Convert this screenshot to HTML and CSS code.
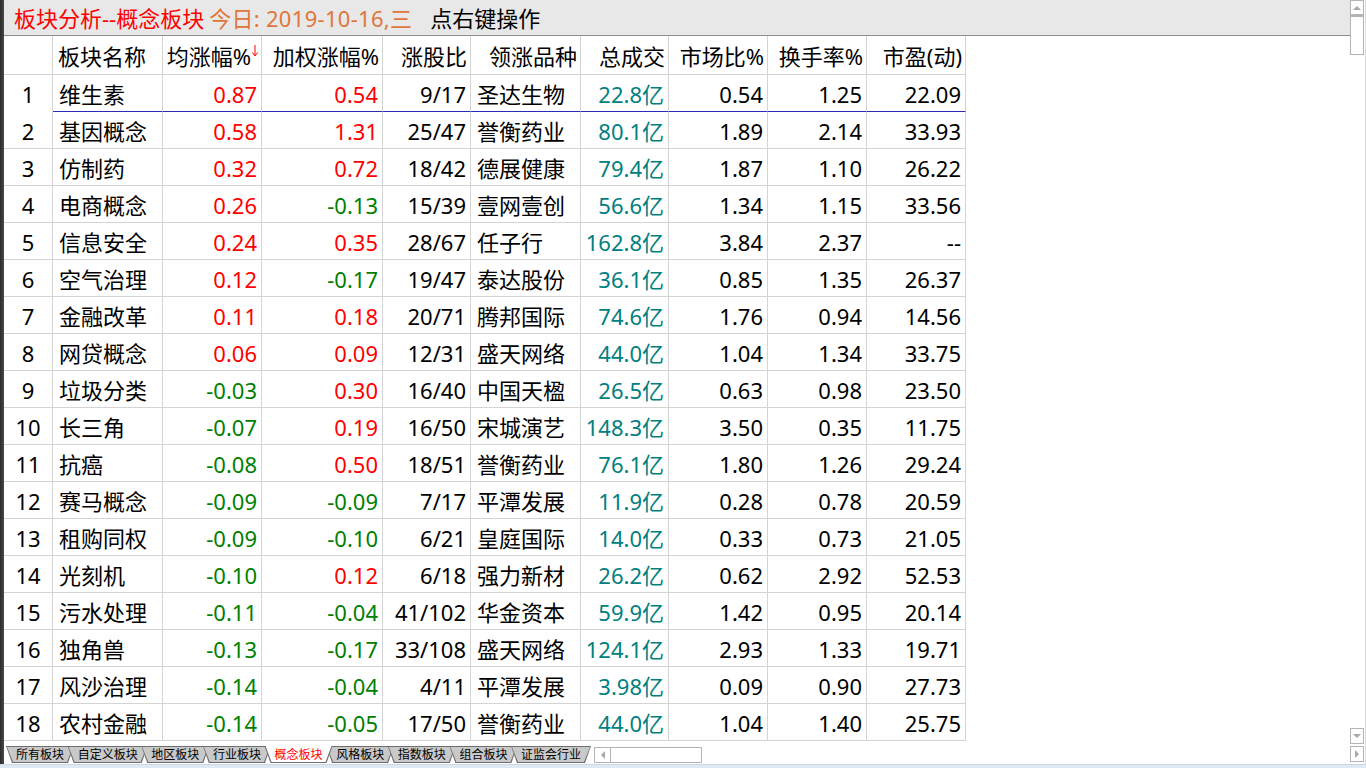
FILE: index.html
```html
<!DOCTYPE html>
<html lang="zh-CN">

<head>
    <meta charset="UTF-8">
    <title>板块分析--概念板块</title>
    <link rel="stylesheet" href="styles.css">
</head>

<body>
    <div class="screen">
        <div class="frame">
            <div class="edge"></div>

            <div class="main">
                <div class="titlebar">
                    <span class="t-red">板块分析--概念板块</span>
                    <span class="t-date">今日: 2019-10-16,三</span>
                    <span class="t-hint">点右键操作</span>
                </div>

                <div class="content">
                    <div class="grid">
                        <div class="row head">
                            <div class="c idx"></div>
                            <div class="c name">板块名称</div>
                            <div class="c">均涨幅%<svg class="sort" width="6" height="12" viewBox="0 0 6 12"><path d="M3 0V10M0.5 7.5L3 11L5.5 7.5" fill="none" stroke="#ff0000" stroke-width="1"/></svg></div>
                            <div class="c">加权涨幅%</div>
                            <div class="c">涨股比</div>
                            <div class="c">领涨品种</div>
                            <div class="c">总成交</div>
                            <div class="c">市场比%</div>
                            <div class="c">换手率%</div>
                            <div class="c">市盈(动)</div>
                        </div>

                        <div class="row sel">
                            <div class="c idx">1</div><div class="c name">维生素</div>
                            <div class="c up">0.87</div><div class="c up">0.54</div><div class="c">9/17</div>
                            <div class="c lead">圣达生物</div><div class="c amt">22.8亿</div>
                            <div class="c">0.54</div><div class="c">1.25</div><div class="c">22.09</div>
                        </div>
                        <div class="row">
                            <div class="c idx">2</div><div class="c name">基因概念</div>
                            <div class="c up">0.58</div><div class="c up">1.31</div><div class="c">25/47</div>
                            <div class="c lead">誉衡药业</div><div class="c amt">80.1亿</div>
                            <div class="c">1.89</div><div class="c">2.14</div><div class="c">33.93</div>
                        </div>
                        <div class="row">
                            <div class="c idx">3</div><div class="c name">仿制药</div>
                            <div class="c up">0.32</div><div class="c up">0.72</div><div class="c">18/42</div>
                            <div class="c lead">德展健康</div><div class="c amt">79.4亿</div>
                            <div class="c">1.87</div><div class="c">1.10</div><div class="c">26.22</div>
                        </div>
                        <div class="row">
                            <div class="c idx">4</div><div class="c name">电商概念</div>
                            <div class="c up">0.26</div><div class="c dn">-0.13</div><div class="c">15/39</div>
                            <div class="c lead">壹网壹创</div><div class="c amt">56.6亿</div>
                            <div class="c">1.34</div><div class="c">1.15</div><div class="c">33.56</div>
                        </div>
                        <div class="row">
                            <div class="c idx">5</div><div class="c name">信息安全</div>
                            <div class="c up">0.24</div><div class="c up">0.35</div><div class="c">28/67</div>
                            <div class="c lead">任子行</div><div class="c amt">162.8亿</div>
                            <div class="c">3.84</div><div class="c">2.37</div><div class="c">--</div>
                        </div>
                        <div class="row">
                            <div class="c idx">6</div><div class="c name">空气治理</div>
                            <div class="c up">0.12</div><div class="c dn">-0.17</div><div class="c">19/47</div>
                            <div class="c lead">泰达股份</div><div class="c amt">36.1亿</div>
                            <div class="c">0.85</div><div class="c">1.35</div><div class="c">26.37</div>
                        </div>
                        <div class="row">
                            <div class="c idx">7</div><div class="c name">金融改革</div>
                            <div class="c up">0.11</div><div class="c up">0.18</div><div class="c">20/71</div>
                            <div class="c lead">腾邦国际</div><div class="c amt">74.6亿</div>
                            <div class="c">1.76</div><div class="c">0.94</div><div class="c">14.56</div>
                        </div>
                        <div class="row">
                            <div class="c idx">8</div><div class="c name">网贷概念</div>
                            <div class="c up">0.06</div><div class="c up">0.09</div><div class="c">12/31</div>
                            <div class="c lead">盛天网络</div><div class="c amt">44.0亿</div>
                            <div class="c">1.04</div><div class="c">1.34</div><div class="c">33.75</div>
                        </div>
                        <div class="row">
                            <div class="c idx">9</div><div class="c name">垃圾分类</div>
                            <div class="c dn">-0.03</div><div class="c up">0.30</div><div class="c">16/40</div>
                            <div class="c lead">中国天楹</div><div class="c amt">26.5亿</div>
                            <div class="c">0.63</div><div class="c">0.98</div><div class="c">23.50</div>
                        </div>
                        <div class="row">
                            <div class="c idx">10</div><div class="c name">长三角</div>
                            <div class="c dn">-0.07</div><div class="c up">0.19</div><div class="c">16/50</div>
                            <div class="c lead">宋城演艺</div><div class="c amt">148.3亿</div>
                            <div class="c">3.50</div><div class="c">0.35</div><div class="c">11.75</div>
                        </div>
                        <div class="row">
                            <div class="c idx">11</div><div class="c name">抗癌</div>
                            <div class="c dn">-0.08</div><div class="c up">0.50</div><div class="c">18/51</div>
                            <div class="c lead">誉衡药业</div><div class="c amt">76.1亿</div>
                            <div class="c">1.80</div><div class="c">1.26</div><div class="c">29.24</div>
                        </div>
                        <div class="row">
                            <div class="c idx">12</div><div class="c name">赛马概念</div>
                            <div class="c dn">-0.09</div><div class="c dn">-0.09</div><div class="c">7/17</div>
                            <div class="c lead">平潭发展</div><div class="c amt">11.9亿</div>
                            <div class="c">0.28</div><div class="c">0.78</div><div class="c">20.59</div>
                        </div>
                        <div class="row">
                            <div class="c idx">13</div><div class="c name">租购同权</div>
                            <div class="c dn">-0.09</div><div class="c dn">-0.10</div><div class="c">6/21</div>
                            <div class="c lead">皇庭国际</div><div class="c amt">14.0亿</div>
                            <div class="c">0.33</div><div class="c">0.73</div><div class="c">21.05</div>
                        </div>
                        <div class="row">
                            <div class="c idx">14</div><div class="c name">光刻机</div>
                            <div class="c dn">-0.10</div><div class="c up">0.12</div><div class="c">6/18</div>
                            <div class="c lead">强力新材</div><div class="c amt">26.2亿</div>
                            <div class="c">0.62</div><div class="c">2.92</div><div class="c">52.53</div>
                        </div>
                        <div class="row">
                            <div class="c idx">15</div><div class="c name">污水处理</div>
                            <div class="c dn">-0.11</div><div class="c dn">-0.04</div><div class="c">41/102</div>
                            <div class="c lead">华金资本</div><div class="c amt">59.9亿</div>
                            <div class="c">1.42</div><div class="c">0.95</div><div class="c">20.14</div>
                        </div>
                        <div class="row">
                            <div class="c idx">16</div><div class="c name">独角兽</div>
                            <div class="c dn">-0.13</div><div class="c dn">-0.17</div><div class="c">33/108</div>
                            <div class="c lead">盛天网络</div><div class="c amt">124.1亿</div>
                            <div class="c">2.93</div><div class="c">1.33</div><div class="c">19.71</div>
                        </div>
                        <div class="row">
                            <div class="c idx">17</div><div class="c name">风沙治理</div>
                            <div class="c dn">-0.14</div><div class="c dn">-0.04</div><div class="c">4/11</div>
                            <div class="c lead">平潭发展</div><div class="c amt">3.98亿</div>
                            <div class="c">0.09</div><div class="c">0.90</div><div class="c">27.73</div>
                        </div>
                        <div class="row">
                            <div class="c idx">18</div><div class="c name">农村金融</div>
                            <div class="c dn">-0.14</div><div class="c dn">-0.05</div><div class="c">17/50</div>
                            <div class="c lead">誉衡药业</div><div class="c amt">44.0亿</div>
                            <div class="c">1.04</div><div class="c">1.40</div><div class="c">25.75</div>
                        </div>
                    </div>
                </div>

                <div class="tabbar">
                    <span class="tab">所有板块</span>
                    <span class="tab">自定义板块</span>
                    <span class="tab">地区板块</span>
                    <span class="tab">行业板块</span>
                    <span class="tab active">概念板块</span>
                    <span class="tab">风格板块</span>
                    <span class="tab">指数板块</span>
                    <span class="tab">组合板块</span>
                    <span class="tab">证监会行业</span>
                    <div class="hscroll">
                        <div class="sbtn left"><span class="tri-l"></span></div>
                    </div>
                </div>
            </div>

            <div class="vscroll">
                <div class="sbtn up"><span class="tri-u"></span></div>
                <div class="thumb"></div>
                <div class="track"></div>
                <div class="sbtn down"><span class="tri-d"></span></div>
                <div class="sbtn right"><span class="tri-r"></span></div>
            </div>
        </div>
        <div class="status"></div>
    </div>
</body>

</html>
```

FILE: styles.css
```css
html,
body {
    margin: 0;
    padding: 0;
}

body {
    width: 1366px;
    height: 768px;
    overflow: hidden;
    background: #fff;
    font-family: "Noto Sans", "Noto Sans CJK SC", sans-serif;
    color: #000;
}

.screen {
    display: flex;
    flex-direction: column;
    height: 768px;
}

.frame {
    display: flex;
    height: 764px;
}

.edge {
    width: 4px;
    background: linear-gradient(to right, #2a2a2a, #4a4a4a);
}

.main {
    width: 1346px;
    display: flex;
    flex-direction: column;
}

/* title line */
.titlebar {
    height: 35px;
    border-bottom: 1px solid #8e8e8e;
    background: #e8e8e8;
    display: flex;
    align-items: center;
    padding-left: 10px;
    font-size: 22px;
    line-height: 1;
    white-space: nowrap;
}

.t-red {
    color: #ff0000;
}

.t-date {
    color: #e0763a;
    margin-left: 5px;
    letter-spacing: 0.3px;
}

.t-hint {
    margin-left: 18px;
}

.content {
    height: 705px;
    overflow: hidden;
}

/* data grid */
.grid {
    display: grid;
    grid-template-columns: 49px 110px 99px 121px 88px 110px 88px 99px 99px 99px;
    grid-template-rows: 39px repeat(18, 37px);
    width: 962px;
    font-size: 22px;
    line-height: 1;
}

.row {
    display: contents;
}

.c {
    box-sizing: border-box;
    border-right: 1px solid #d4d4d4;
    border-bottom: 1px solid #d4d4d4;
    display: flex;
    align-items: center;
    justify-content: flex-end;
    padding: 1px 4px 0 0;
    white-space: nowrap;
    overflow: hidden;
}

.c.idx {
    justify-content: center;
    padding-right: 0;
}

.c.name,
.c.lead {
    justify-content: flex-start;
    padding-left: 6px;
}

.head .c {
    padding-right: 3px;
}

.head .c.name {
    padding-left: 5px;
}

.sort {
    margin: 0 0 10px 1px;
}

.sel .c {
    border-bottom-color: #2a2ab4;
}

.sel .c.idx {
    border-bottom-color: #fff;
}

.up {
    color: #ff0000;
}

.dn {
    color: #008000;
}

.amt {
    color: #008080;
}

/* sheet tabs */
.tabbar {
    height: 23px;
    display: flex;
    align-items: flex-start;
    padding: 5px 0 0 2px;
    box-sizing: border-box;
}

.tab {
    position: relative;
    z-index: 1;
    height: 17px;
    line-height: 17px;
    padding: 0 10px;
    margin-left: -6.4px;
    font-size: 12px;
    white-space: nowrap;
}

.tab:first-child {
    margin-left: 0;
}

.tab::before,
.tab::after {
    content: "";
    position: absolute;
    z-index: -1;
    clip-path: polygon(0 0, 100% 0, calc(100% - 6px) 100%, 6px 100%);
}

.tab::before {
    top: 0;
    left: 0;
    right: 0;
    bottom: 0;
    background: #6e6e6e;
}

.tab::after {
    top: 1px;
    left: 1px;
    right: 1px;
    bottom: 1px;
    background: #c9c9c9;
}

.tab.active {
    z-index: 2;
    color: #ff0000;
}

.tab.active::after {
    top: 0;
    background: #fff;
}

.hscroll {
    margin: 1px 0 0 3px;
    width: 108px;
    height: 16px;
    box-sizing: border-box;
    border: 1px solid #b4b4b4;
    background: #fff;
    display: flex;
}

.hscroll .sbtn.left {
    width: 16px;
    height: 14px;
    border: none;
    border-right: 1px solid #b4b4b4;
}

/* vertical scroll bar */
.vscroll {
    width: 14px;
    padding-right: 1px;
    border-right: 1px solid #dcdcdc;
    display: flex;
    flex-direction: column;
}

.sbtn {
    box-sizing: border-box;
    border: 1px solid #b4b4b4;
    background: #fff;
    display: flex;
    align-items: center;
    justify-content: center;
}

.vscroll .up {
    height: 15px;
}

.thumb {
    height: 40px;
    box-sizing: border-box;
    border: 1px solid #b4b4b4;
    border-top-width: 2px;
}

.track {
    flex: 1;
}

.vscroll .down {
    height: 16px;
}

.vscroll .right {
    height: 16px;
    margin: 2px 0 2px;
}

.tri-u,
.tri-d,
.tri-l,
.tri-r {
    width: 0;
    height: 0;
    border-style: solid;
    border-color: transparent;
}

.tri-u {
    border-width: 0 4px 4px 4px;
    border-bottom-color: #a8a8a8;
}

.tri-d {
    border-width: 4px 4px 0 4px;
    border-top-color: #a8a8a8;
}

.tri-l {
    border-width: 4px 4px 4px 0;
    border-right-color: #a8a8a8;
}

.tri-r {
    border-width: 4px 0 4px 4px;
    border-left-color: #a8a8a8;
}

.status {
    height: 3px;
    border-top: 1px solid #cbd8e8;
    background: #dfe9f5;
}
```
